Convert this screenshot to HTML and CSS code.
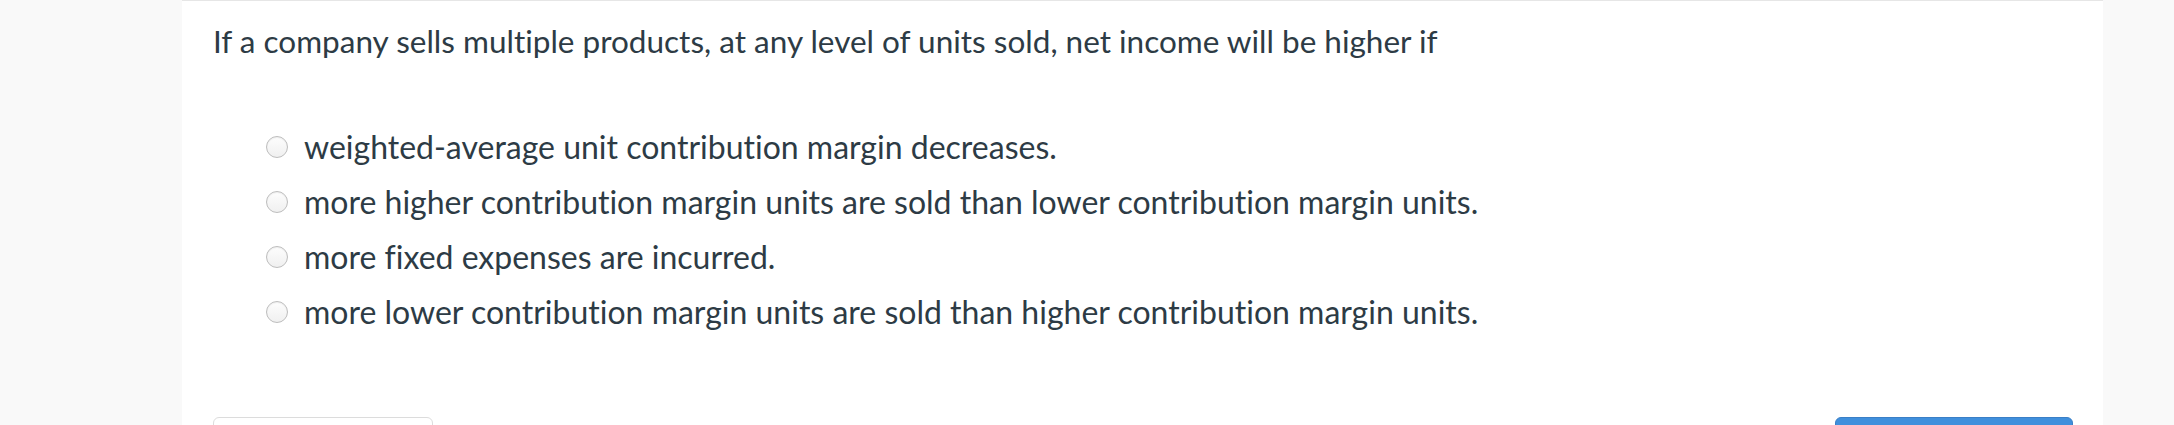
FILE: index.html
```html
<!DOCTYPE html>
<html lang="en">

<head>
	<meta charset="UTF-8">
	<title>Quiz question</title>
	<meta name="viewport" content="width=device-width">
	<link rel="stylesheet" href="styles.css">
</head>

<body>
	<main class="quizCard">
		<p class="questionText">If a company sells multiple products, at any level of units sold, net income will be higher if</p>
		<div class="answers">
			<label class="answer"><input type="radio" name="q1"><span>weighted-average unit contribution margin decreases.</span></label>
			<label class="answer"><input type="radio" name="q1"><span>more higher contribution margin units are sold than lower contribution margin units.</span></label>
			<label class="answer"><input type="radio" name="q1"><span>more fixed expenses are incurred.</span></label>
			<label class="answer"><input type="radio" name="q1"><span>more lower contribution margin units are sold than higher contribution margin units.</span></label>
		</div>
		<div class="navBar">
			<!-- labels sit below the visible area -->
			<button class="btn" aria-label="Previous"></button>
			<button class="btn btnPrimary" aria-label="Next"></button>
		</div>
	</main>
</body>

</html>
```

FILE: styles.css
```css
html,
body {
	margin: 0;
	background: #f9f9f9;
}

body {
	font-family: Lato, "Open Sans", sans-serif;
	color: #2d3b45;
	height: 425px;
	overflow: hidden;
	font-variant-ligatures: no-common-ligatures;
}

.quizCard {
	margin-left: 182px;
	width: 1921px;
	box-sizing: border-box;
	min-height: 600px;
	background: #fff;
	border-top: 1px solid #e6e6e6;
	padding: 20px 30px 0 31px;
}

.questionText {
	margin: 0;
	font-size: 31.5px;
	line-height: 40px;
}

.answers {
	display: flex;
	flex-direction: column;
	margin-top: 58px;
	padding-left: 53px;
}

.answer {
	display: flex;
	align-items: center;
	height: 55px;
	font-size: 32px;
	line-height: 55px;
}

.answer input {
	appearance: none;
	-webkit-appearance: none;
	width: 22px;
	height: 22px;
	margin: 0 16px 0 0;
	border-radius: 50%;
	border: 1px solid #bdbdbd;
	background: linear-gradient(#fdfdfd, #f0f0f0);
	box-shadow: inset 0 1px 1px rgba(0, 0, 0, 0.06);
	flex-shrink: 0;
}

.navBar {
	display: flex;
	justify-content: space-between;
	margin-top: 78px;
}

.btn {
	width: 220px;
	height: 44px;
	border: 1px solid #dcdcdc;
	border-radius: 6px;
	background: #fff;
}

.btnPrimary {
	width: 238px;
	background: #3f8fdc;
	border-color: #3a7fc6;
}
```
